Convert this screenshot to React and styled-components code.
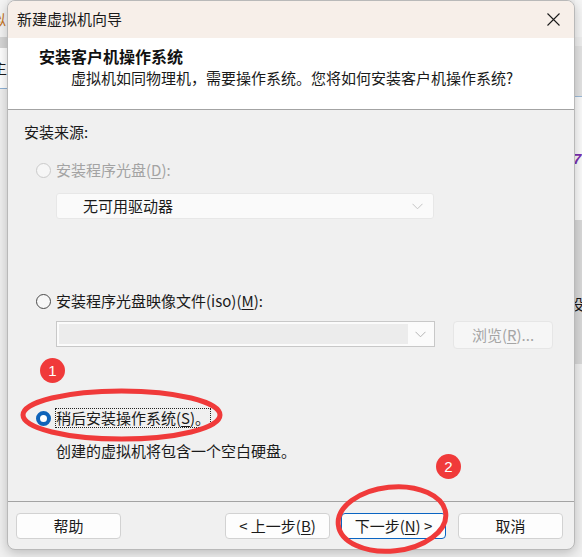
import React from 'react';
import styled, { createGlobalStyle } from 'styled-components';

const GlobalStyle = createGlobalStyle`
  html, body {
    margin: 0;
    padding: 0;
    background: #f0f0f0;
  }
  body {
    font-family: "Noto Sans CJK SC", "Noto Sans", sans-serif;
    color: #1a1a1a;
  }
`;

const Chevron = ({ color = '#a8a8a8' }) => (
    <svg width="11" height="7" viewBox="0 0 11 7">
        <path d="M0.5 0.8 L5.5 5.8 L10.5 0.8" fill="none" stroke={color} strokeWidth="1" />
    </svg>
);

const CloseIcon = () => (
    <svg width="13" height="13" viewBox="0 0 13 13">
        <path d="M0.5 0.5 L12.5 12.5 M12.5 0.5 L0.5 12.5" stroke="#1b1b1b" strokeWidth="1.1" />
    </svg>
);

const App = () => {
    return (
        <>
            <GlobalStyle />
            <Desktop>
                <SideStrip>
                    <Band $h={37} $bg="#f4f4f4">
                        <Peek $color="#c5761f" $shift={-9}>似</Peek>
                    </Band>
                    <Band $h={11} $bg="#d6d6d6" />
                    <Band $h={40} $bg="#ffffff">
                        <Peek $shift={-8}>主</Peek>
                    </Band>
                    <Band $h={1} $bg="#8fb2d6" />
                    <Band $grow $bg="#f0f0f0" />
                </SideStrip>

                <Middle>
                    <Dialog>
                        <TitleBar>
                            <TitleText>新建虚拟机向导</TitleText>
                            <CloseButton><CloseIcon /></CloseButton>
                        </TitleBar>

                        <Header>
                            <Heading>安装客户机操作系统</Heading>
                            <SubHeading>虚拟机如同物理机，需要操作系统。您将如何安装客户机操作系统?</SubHeading>
                        </Header>

                        <Body>
                            <Label>安装来源:</Label>

                            <RadioRow $top={18} $disabled>
                                <Radio $disabled />
                                <span>安装程序光盘(<u>D</u>):</span>
                            </RadioRow>
                            <DriveSelect>
                                <span>无可用驱动器</span>
                                <Chevron color="#c4c4c4" />
                            </DriveSelect>

                            <RadioRow $top={72}>
                                <Radio />
                                <span>安装程序光盘映像文件(iso)(<u>M</u>):</span>
                            </RadioRow>
                            <IsoRow>
                                <IsoCombo>
                                    <IsoField />
                                    <ArrowSlot><Chevron color="#b4b4b4" /></ArrowSlot>
                                </IsoCombo>
                                <BrowseButton>浏览(<u>R</u>)...</BrowseButton>
                            </IsoRow>

                            <RadioRow $top={59}>
                                <Radio $checked />
                                <FocusLabel>稍后安装操作系统(<u>S</u>)。</FocusLabel>
                            </RadioRow>
                            <Description>创建的虚拟机将包含一个空白硬盘。</Description>
                        </Body>

                        <Footer>
                            <Button>帮助</Button>
                            <Spacer />
                            <Button>&lt; 上一步(<u>B</u>)</Button>
                            <Button $primary>下一步(<u>N</u>) &gt;</Button>
                            <Button $gap={12}>取消</Button>
                        </Footer>
                    </Dialog>
                </Middle>

                <SideStrip>
                    <Band $h={37} $bg="#f5f5f5" />
                    <Band $h={9} $bg="#efefef" />
                    <Band $h={50} $bg="#e4e4e4" />
                    <Band $h={1} $bg="#9dbbd9" />
                    <Band $h={123} $bg="#fbfbfb">
                        <Peek $color="#7b2fb0" $shift={-2} $top={62} $bold>7</Peek>
                    </Band>
                    <Band $h={144} $bg="#d9d9d9">
                        <Peek $shift={-6} $top={84}>设</Peek>
                    </Band>
                    <Band $grow $bg="#f0f0f0" />
                </SideStrip>

                <Marker $x={20} $y={388} $w={203} $h={54}>
                    <svg width="203" height="54" viewBox="0 0 203 54">
                        <ellipse cx="101.5" cy="27" rx="98.5" ry="24" fill="none" stroke="#f03a3a" strokeWidth="5" />
                    </svg>
                </Marker>
                <Badge $x={40} $y={358}>1</Badge>

                <Marker $x={334} $y={484} $w={116} $h={70}>
                    <svg width="116" height="70" viewBox="0 0 116 70">
                        <ellipse cx="58" cy="35" rx="54" ry="32" fill="none" stroke="#f03a3a" strokeWidth="5" transform="rotate(-6 58 35)" />
                    </svg>
                </Marker>
                <Badge $x={436} $y={454}>2</Badge>
            </Desktop>
        </>
    );
};

export default App;

const Desktop = styled.div`
    position: relative;
    width: 582px;
    height: 557px;
    display: flex;
    overflow: hidden;
    background: #f0f0f0;
`;

const SideStrip = styled.div`
    width: 7px;
    flex: none;
    display: flex;
    flex-direction: column;
    overflow: hidden;
`;

const Band = styled.div`
    position: relative;
    height: ${p => (p.$h ? `${p.$h}px` : 'auto')};
    flex: ${p => (p.$grow ? '1' : 'none')};
    background: ${p => p.$bg};
    overflow: hidden;
`;

const Peek = styled.span`
    position: absolute;
    top: ${p => (p.$top != null ? `${p.$top}px` : '50%')};
    left: ${p => p.$shift}px;
    transform: translateY(-50%);
    font-size: 15px;
    line-height: 20px;
    font-weight: ${p => (p.$bold ? 700 : 400)};
    color: ${p => p.$color || '#1a1a1a'};
    font-family: ${p => (p.$bold ? '"Liberation Sans", sans-serif' : 'inherit')};
    font-style: ${p => (p.$bold ? 'italic' : 'normal')};
`;

const Middle = styled.div`
    width: 568px;
    flex: none;
    display: flex;
    flex-direction: column;
`;

const Dialog = styled.div`
    height: 550px;
    box-sizing: border-box;
    display: flex;
    flex-direction: column;
    border: 1px solid #b9b9b9;
    border-radius: 8px;
    overflow: hidden;
    background: #f0f0f0;
    box-shadow: 0 3px 12px rgba(0, 0, 0, 0.22);
    z-index: 1;
`;

const TitleBar = styled.div`
    height: 37px;
    flex: none;
    display: flex;
    align-items: center;
    justify-content: space-between;
    padding: 0 14px 0 9px;
    background: #f7efe9;
`;

const TitleText = styled.div`
    font-size: 15px;
    line-height: 20px;
    color: #1a1a1a;
    margin-top: -1px;
`;

const CloseButton = styled.div`
    display: flex;
    align-items: center;
    justify-content: center;
    width: 13px;
    height: 13px;
    margin-top: -1px;
`;

const Header = styled.div`
    height: 72px;
    flex: none;
    box-sizing: border-box;
    padding: 8px 0 0 31px;
    background: #ffffff;
    border-bottom: 1px solid #a3a3a3;
`;

const Heading = styled.div`
    font-size: 16px;
    line-height: 20px;
    font-weight: 700;
    color: #111;
`;

const SubHeading = styled.div`
    margin-top: 2px;
    padding-left: 32px;
    font-size: 15px;
    line-height: 20px;
    color: #1a1a1a;
`;

const Body = styled.div`
    flex: 1;
    display: flex;
    flex-direction: column;
    align-items: flex-start;
    padding: 12px 0 0 16px;
    border-bottom: 1px solid #a3a3a3;
    font-size: 15px;
    line-height: 20px;

    u {
        text-decoration: underline;
        text-underline-offset: 2px;
        text-decoration-thickness: 1px;
    }
`;

const Label = styled.div`
    color: #1a1a1a;
`;

const RadioRow = styled.div`
    display: flex;
    align-items: center;
    gap: 5px;
    margin: ${p => p.$top}px 0 0 12px;
    color: ${p => (p.$disabled ? '#a3a3a3' : '#1a1a1a')};
`;

const Radio = styled.span`
    box-sizing: border-box;
    width: 15px;
    height: 15px;
    border-radius: 50%;
    flex: none;
    background: ${p => (p.$checked ? '#ffffff' : p.$disabled ? '#f6f6f6' : '#f7f7f7')};
    border: ${p => (p.$checked ? '4.5px solid #0f63b9' : p.$disabled ? '1px solid #cacaca' : '1px solid #4a4a4a')};
`;

const FocusLabel = styled.span`
    outline: 1px dotted #222;
    outline-offset: -1px;
    padding: 0 1px;
    margin-left: -1px;
`;

const DriveSelect = styled.div`
    box-sizing: border-box;
    width: 378px;
    height: 26px;
    margin: 13px 0 0 32px;
    padding: 0 10px 0 26px;
    display: flex;
    align-items: center;
    justify-content: space-between;
    background: #fafafa;
    border: 1px solid #e7e7e7;
    border-radius: 3px;
    color: #1a1a1a;
`;

const IsoRow = styled.div`
    display: flex;
    align-items: flex-start;
    gap: 18px;
    margin: 10px 0 0 32px;
`;

const IsoCombo = styled.div`
    box-sizing: border-box;
    width: 379px;
    height: 26px;
    display: flex;
    padding: 2px;
    background: #fbfbfb;
    border: 1px solid #c8c8c8;
`;

const IsoField = styled.div`
    flex: 1;
    background: #ececec;
`;

const ArrowSlot = styled.div`
    width: 24px;
    display: flex;
    align-items: center;
    justify-content: center;
`;

const BrowseButton = styled.div`
    box-sizing: border-box;
    width: 100px;
    height: 28px;
    display: flex;
    align-items: center;
    justify-content: center;
    background: #f6f6f6;
    border: 1px solid #e6e6e6;
    border-radius: 4px;
    color: #a5a5a5;
`;

const Description = styled.div`
    margin: 13px 0 0 32px;
    color: #1a1a1a;
`;

const Footer = styled.div`
    height: 47px;
    flex: none;
    box-sizing: border-box;
    display: flex;
    align-items: flex-start;
    padding: 11px 11px 0 8px;
    gap: 11px;
`;

const Spacer = styled.div`
    flex: 1;
`;

const Button = styled.div`
    box-sizing: border-box;
    width: 105px;
    height: 26px;
    display: flex;
    align-items: center;
    justify-content: center;
    margin-left: ${p => (p.$gap ? `${p.$gap - 11}px` : '0')};
    background: #fdfdfd;
    border: 1px solid ${p => (p.$primary ? '#0a64c2' : '#d2d2d2')};
    border-radius: 4px;
    font-size: 15px;
    line-height: 20px;
    color: #1a1a1a;

    u {
        text-decoration: underline;
        text-underline-offset: 2px;
        text-decoration-thickness: 1px;
    }
`;

const Marker = styled.div`
    position: absolute;
    left: ${p => p.$x}px;
    top: ${p => p.$y}px;
    width: ${p => p.$w}px;
    height: ${p => p.$h}px;
    z-index: 5;
    pointer-events: none;

    svg {
        display: block;
    }
`;

const Badge = styled.div`
    position: absolute;
    left: ${p => p.$x}px;
    top: ${p => p.$y}px;
    width: 25px;
    height: 25px;
    border-radius: 50%;
    background: #f03a3a;
    color: #ffffff;
    display: flex;
    align-items: center;
    justify-content: center;
    font-family: "Liberation Sans", Arial, sans-serif;
    font-size: 15px;
    z-index: 5;
`;
